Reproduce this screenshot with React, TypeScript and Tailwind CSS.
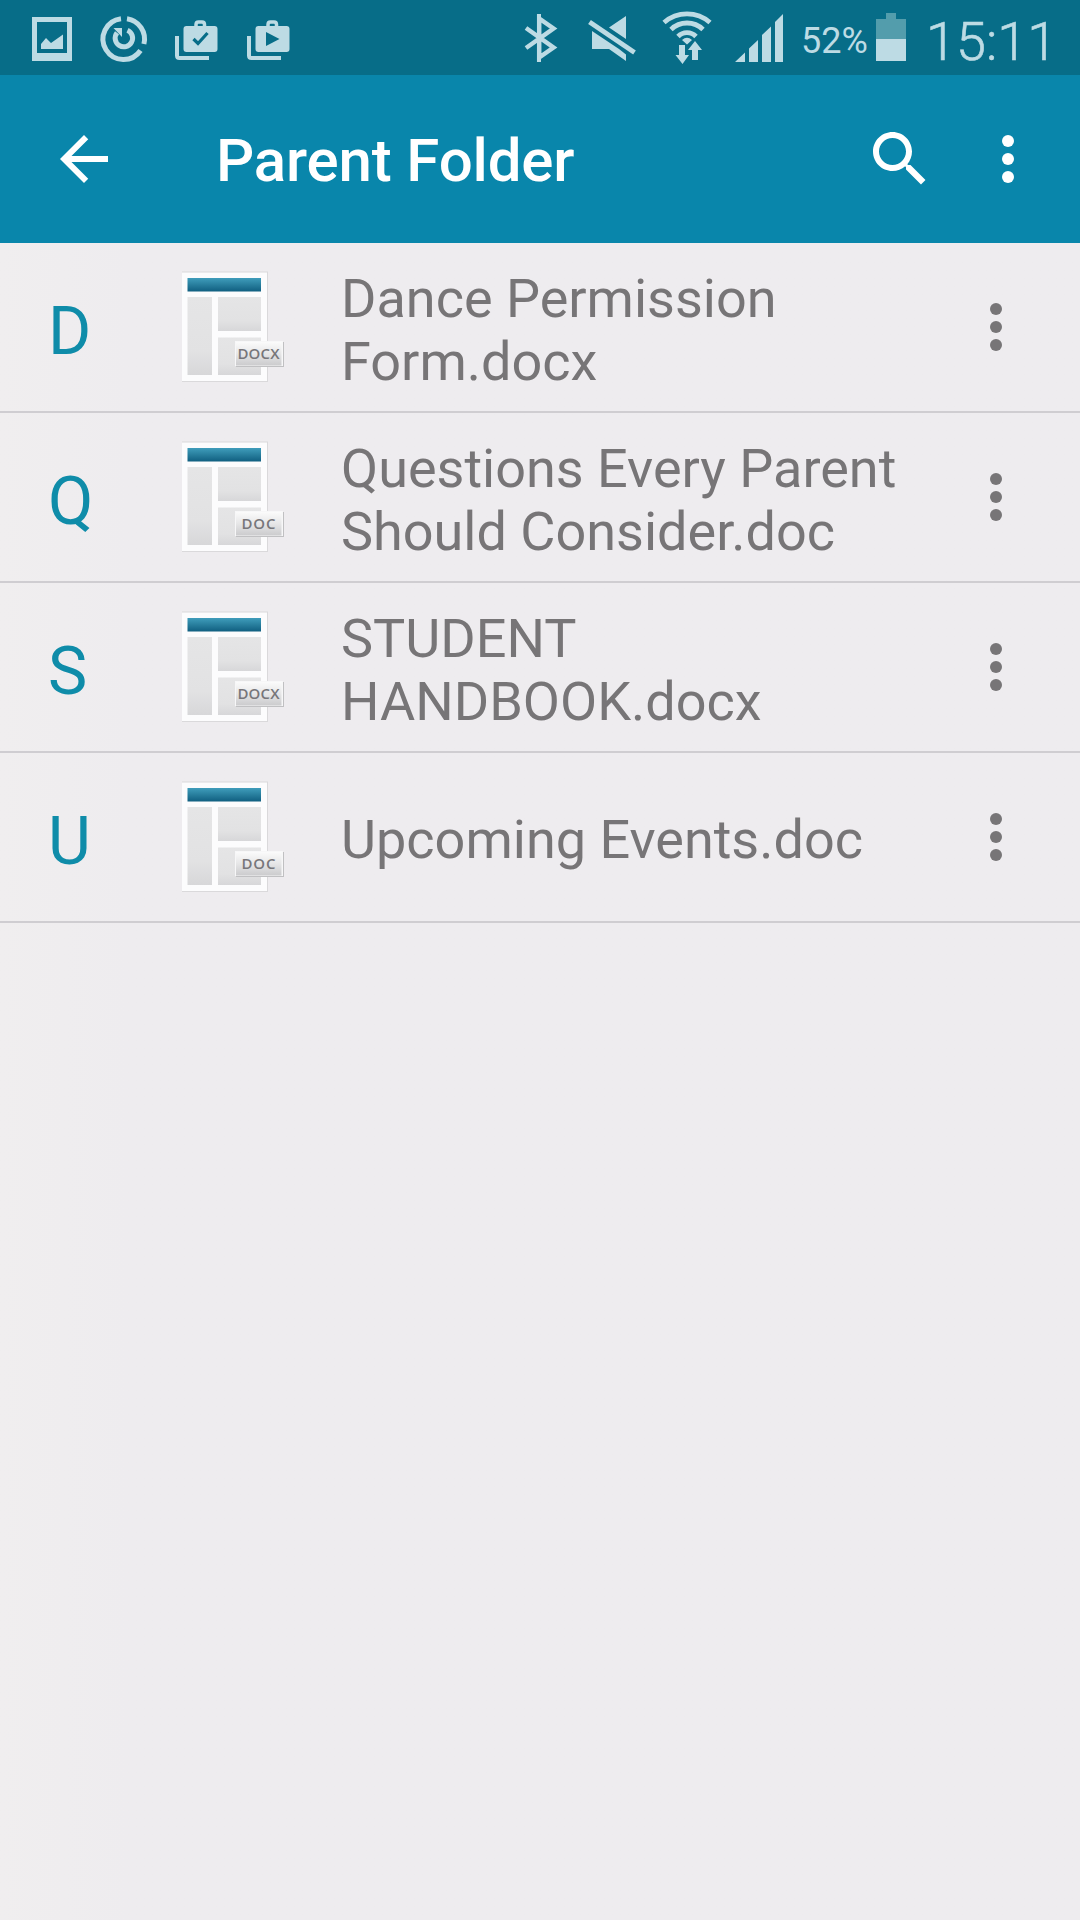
const files = [
  { letter: "D", name: "Dance Permission Form.docx", type: "DOCX" },
  { letter: "Q", name: "Questions Every Parent Should Consider.doc", type: "DOC" },
  { letter: "S", name: "STUDENT HANDBOOK.docx", type: "DOCX" },
  { letter: "U", name: "Upcoming Events.doc", type: "DOC" },
];

function NotificationIcons() {
  return (
    <svg className="h-[75px] w-[300px] shrink-0" viewBox="0 0 300 75" fill="currentColor">
      <path fillRule="evenodd" d="M32 17h40v44H32zM37 22v31h30V22z" />
      <path d="M41 49v-5l5-6 5 5 12-8.500v14.500z" />
      <g fill="none" stroke="currentColor" strokeWidth="5">
        <path d="M121 18.700A20.500 20.500 0 1 0 140.500 50.500" />
        <path d="M127 18.700A20.500 20.500 0 0 1 143.900 44" />
        <path d="M127.500 30.200A8.700 8.700 0 1 1 117 32.800" />
      </g>
      <path d="M113.500 28H122v9z" />
      <Bag x={0} />
      <path d="M193.500 39l4.500 4.500 9.500-10.500" fill="none" stroke="#076d88" strokeWidth="3.200" />
      <Bag x={72} />
      <path d="M266 32l13.500 7-13.500 7z" fill="#076d88" />
    </svg>
  );
}

function Bag({ x }: { x: number }) {
  return (
    <g transform={`translate(${x} 0)`}>
      <rect x="183.500" y="26" width="34" height="26" rx="3" />
      <path d="M196 27v-2.500q0-2.500 2.500-2.500h3.500q2.500 0 2.500 2.500V27" fill="none" stroke="currentColor" strokeWidth="3.500" />
      <path d="M177 36v19.500q0 2.500 2.500 2.500H209" fill="none" stroke="currentColor" strokeWidth="4" />
    </g>
  );
}

function SystemIcons() {
  return (
    <svg className="ml-auto h-[75px] w-[280px] shrink-0" viewBox="515 0 280 75" fill="currentColor">
      <path d="M526 28l27.500 19.500-14.300 10V18.500l14.300 10L526 48" fill="none" stroke="currentColor" strokeWidth="4.500" />
      <path d="M537 14h4v48h-4z" />
      <path d="M592 31l27 18 7 5.500V61l-17-12h-17zM609 27.500L626 16v23z" />
      <path d="M589.500 22l45 30.500" stroke="currentColor" strokeWidth="4.800" />
      <g fill="none" stroke="currentColor" strokeWidth="4.800">
        <path d="M664 22.500A35 35 0 0 1 710 22.500" />
        <path d="M671 29.500A23 23 0 0 1 703 29.500" />
        <path d="M678 36.500A12.500 12.500 0 0 1 696 36.500" />
      </g>
      <path d="M682 40q5-4.500 10 0l-5 4.500z" />
      <path d="M679 45h6v10h4l-6.500 9-7-9h3.500zM692 60V50h-4l7-9 7 9h-4v10z" />
      <path d="M735 62l10-9.500V62zM749 62V48.500l9-8.500v22zM762 62V35l9-8.500V62zM775 62V22l8-8v48z" />
    </svg>
  );
}

function Battery() {
  return (
    <svg className="h-[75px] w-[30px] shrink-0" viewBox="876 0 30 75">
      <path d="M876 19h10v-6h10v6h10v20h-30z" fill="#539dac" />
      <path d="M876 39h30v22h-30z" fill="#bddbe4" />
    </svg>
  );
}

function Dots({ className }: { className: string }) {
  return (
    <svg className={className} viewBox="0 0 12 48" fill="currentColor">
      <circle cx="6" cy="6" r="6" />
      <circle cx="6" cy="24" r="6" />
      <circle cx="6" cy="42" r="6" />
    </svg>
  );
}

function DocIcon({ type }: { type: string }) {
  return (
    <svg className="ml-[84px] h-[114px] w-[110px] shrink-0" viewBox="180 270 110 114">
      <defs>
        <linearGradient id="bar" x1="0" y1="0" x2="0" y2="1">
          <stop offset="0" stopColor="#3f9dbb" />
          <stop offset="1" stopColor="#105f80" />
        </linearGradient>
        <linearGradient id="panel" x1="0" y1="0" x2="0" y2="1">
          <stop offset="0" stopColor="#e5e5e6" />
          <stop offset="0.700" stopColor="#e2e2e3" />
          <stop offset="1" stopColor="#d7d7d9" />
        </linearGradient>
        <linearGradient id="tag" x1="0" y1="0" x2="0" y2="1">
          <stop offset="0" stopColor="#fbfbfb" />
          <stop offset="0.500" stopColor="#e6e6e7" />
          <stop offset="1" stopColor="#cbcbcd" />
        </linearGradient>
      </defs>
      <rect x="182" y="271.500" width="86" height="110.500" fill="#dad9db" />
      <rect x="182" y="272.500" width="85" height="108.500" fill="#fcfcfd" />
      <rect x="187.500" y="278" width="73.500" height="13.500" fill="url(#bar)" />
      <rect x="187.500" y="297" width="24.500" height="78" fill="url(#panel)" />
      <rect x="218" y="297" width="43" height="34" fill="url(#panel)" />
      <rect x="218" y="337.500" width="43" height="37.500" fill="url(#panel)" />
      <rect x="236" y="342" width="48" height="25" fill="#c0c0c2" />
      <rect x="235" y="341" width="48" height="25" fill="#f7f7f8" />
      <rect x="236" y="342" width="45.500" height="23.500" fill="url(#tag)" />
      <text
        x={type === "DOCX" ? 237.500 : 241.500}
        y="358.700"
        textLength={type === "DOCX" ? 42 : 34}
        fill="#77767a"
        className="font-['Open_Sans',sans-serif] text-[15px] font-semibold"
      >
        {type}
      </text>
    </svg>
  );
}

export default function App() {
  return (
    <div className="flex h-[1920px] w-[1080px] flex-col bg-[#eeecef] font-[Roboto,sans-serif]">
      <div className="flex h-[75px] shrink-0 items-center bg-[#076d88] text-[#bddbe4]">
        <NotificationIcons />
        <SystemIcons />
        <span className="ml-[6px] w-[75px] pt-[7px] text-[36px] leading-none whitespace-nowrap">52%</span>
        <Battery />
        <span className="ml-[20px] w-[154px] pt-[8px] text-[54px] leading-none font-light whitespace-nowrap [-webkit-text-stroke:0.6px]">15:11</span>
      </div>
      <header className="flex h-[168px] shrink-0 items-center bg-[#0986ab] text-white">
        <svg className="ml-12 size-[72px] shrink-0" viewBox="0 0 24 24" fill="currentColor">
          <path d="M20 11H7.830l5.590-5.590L12 4l-8 8 8 8 1.410-1.410L7.830 13H20v-2z" />
        </svg>
        <h1 className="ml-24 flex-1 pt-[4px] text-[60px] leading-none font-medium tracking-[-0.15px]">Parent Folder</h1>
        <svg className="mr-[66px] size-[72px] shrink-0" viewBox="0 0 24 24" fill="currentColor">
          <path d="M15.500 14h-.790l-.280-.270C15.410 12.590 16 11.110 16 9.500 16 5.910 13.090 3 9.500 3S3 5.910 3 9.500 5.910 16 9.500 16c1.610 0 3.090-.590 4.230-1.570l.270.280v.790l5 4.990L20.490 19l-4.990-5zm-6 0C7.010 14 5 11.990 5 9.500S7.010 5 9.500 5 14 7.010 14 9.500 11.990 14 9.500 14z" />
        </svg>
        <Dots className="mr-[66px] h-12 w-3 shrink-0" />
      </header>
      <ul className="flex-1 bg-linear-to-r from-[#f0eeef] from-0% to-[#eeecef] to-12%">
        {files.map((file) => (
          <li key={file.name} className="flex h-[170px] items-center border-b-2 border-[#cfcdd1]">
            <span className="ml-12 w-12 pt-[9px] text-[66px] leading-none text-[#0f8ca9]">{file.letter}</span>
            <DocIcon type={file.type} />
            <span className="ml-[51px] w-[579px] pt-[5px] text-[54px] leading-[63px] text-[#777577]">{file.name}</span>
            <Dots className="ml-[70px] h-12 w-3 shrink-0 text-[#777577]" />
          </li>
        ))}
      </ul>
    </div>
  );
}
